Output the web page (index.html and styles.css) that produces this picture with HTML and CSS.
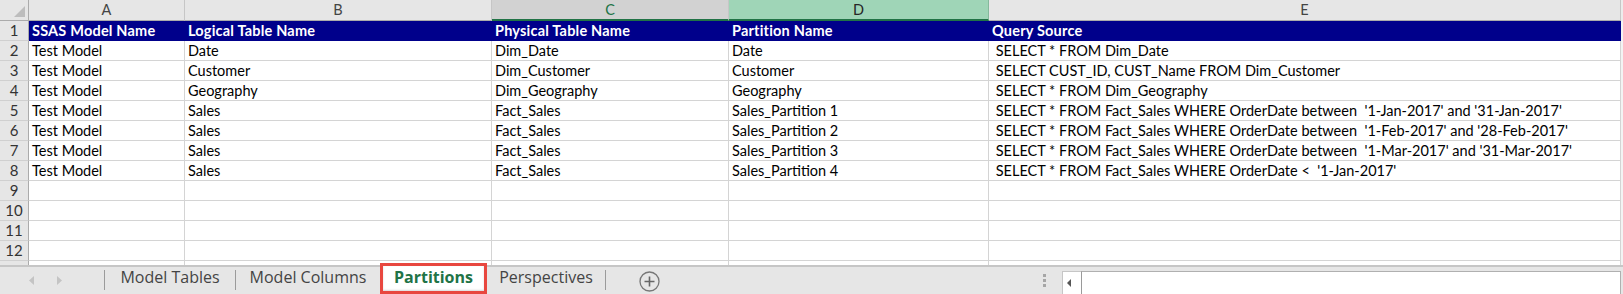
FILE: index.html
```html
<!DOCTYPE html>
<html>
<head>
<meta charset="utf-8">
<link rel="stylesheet" href="styles.css">
</head>
<body>
<div class="sheet">
  <div class="corner"><svg width="12" height="12" viewBox="0 0 12 12"><polygon points="11,0 11,11 0,11" fill="#bdbdbd"/></svg></div>
  <div class="colhead">A</div>
  <div class="colhead">B</div>
  <div class="colhead col-c">C</div>
  <div class="colhead col-d">D</div>
  <div class="colhead">E</div>
  <div class="fill head"></div>

  <div class="rowhead">1</div>
  <div class="cell hdr">SSAS Model Name</div>
  <div class="cell hdr">Logical Table Name</div>
  <div class="cell hdr">Physical Table Name</div>
  <div class="cell hdr">Partition Name</div>
  <div class="cell hdr">Query Source</div>
  <div class="fill"></div>

  <div class="rowhead">2</div>
  <div class="cell">Test Model</div>
  <div class="cell">Date</div>
  <div class="cell">Dim_Date</div>
  <div class="cell">Date</div>
  <div class="cell"> SELECT * FROM Dim_Date</div>
  <div class="fill"></div>

  <div class="rowhead">3</div>
  <div class="cell">Test Model</div>
  <div class="cell">Customer</div>
  <div class="cell">Dim_Customer</div>
  <div class="cell">Customer</div>
  <div class="cell"> SELECT CUST_ID, CUST_Name FROM Dim_Customer</div>
  <div class="fill"></div>

  <div class="rowhead">4</div>
  <div class="cell">Test Model</div>
  <div class="cell">Geography</div>
  <div class="cell">Dim_Geography</div>
  <div class="cell">Geography</div>
  <div class="cell"> SELECT * FROM Dim_Geography</div>
  <div class="fill"></div>

  <div class="rowhead">5</div>
  <div class="cell">Test Model</div>
  <div class="cell">Sales</div>
  <div class="cell">Fact_Sales</div>
  <div class="cell">Sales_Partition 1</div>
  <div class="cell"> SELECT * FROM Fact_Sales WHERE OrderDate between  '1-Jan-2017' and '31-Jan-2017'</div>
  <div class="fill"></div>

  <div class="rowhead">6</div>
  <div class="cell">Test Model</div>
  <div class="cell">Sales</div>
  <div class="cell">Fact_Sales</div>
  <div class="cell">Sales_Partition 2</div>
  <div class="cell"> SELECT * FROM Fact_Sales WHERE OrderDate between  '1-Feb-2017' and '28-Feb-2017'</div>
  <div class="fill"></div>

  <div class="rowhead">7</div>
  <div class="cell">Test Model</div>
  <div class="cell">Sales</div>
  <div class="cell">Fact_Sales</div>
  <div class="cell">Sales_Partition 3</div>
  <div class="cell"> SELECT * FROM Fact_Sales WHERE OrderDate between  '1-Mar-2017' and '31-Mar-2017'</div>
  <div class="fill"></div>

  <div class="rowhead">8</div>
  <div class="cell">Test Model</div>
  <div class="cell">Sales</div>
  <div class="cell">Fact_Sales</div>
  <div class="cell">Sales_Partition 4</div>
  <div class="cell"> SELECT * FROM Fact_Sales WHERE OrderDate &lt;  '1-Jan-2017'</div>
  <div class="fill"></div>

  <div class="rowhead">9</div>
  <div class="cell"></div><div class="cell"></div><div class="cell"></div><div class="cell"></div><div class="cell"></div>
  <div class="fill"></div>

  <div class="rowhead">10</div>
  <div class="cell"></div><div class="cell"></div><div class="cell"></div><div class="cell"></div><div class="cell"></div>
  <div class="fill"></div>

  <div class="rowhead">11</div>
  <div class="cell"></div><div class="cell"></div><div class="cell"></div><div class="cell"></div><div class="cell"></div>
  <div class="fill"></div>

  <div class="rowhead">12</div>
  <div class="cell"></div><div class="cell"></div><div class="cell"></div><div class="cell"></div><div class="cell"></div>
  <div class="fill"></div>

  <div class="rowhead part"></div>
  <div class="cell part"></div><div class="cell part"></div><div class="cell part"></div><div class="cell part"></div><div class="cell part"></div>
  <div class="fill part"></div>
</div>

<div class="tabbar">
  <div class="nav">
    <svg class="arr arr-l" width="5" height="9" viewBox="0 0 5 9"><polygon points="5,0 5,9 0,4.5" fill="#c4c4c4"/></svg>
    <svg class="arr arr-r" width="5" height="9" viewBox="0 0 5 9"><polygon points="0,0 0,9 5,4.5" fill="#c4c4c4"/></svg>
  </div>
  <span class="sep"></span>
  <div class="tab w1">Model Tables</div>
  <span class="sep"></span>
  <div class="tab w2">Model Columns</div>
  <div class="tab active">Partitions</div>
  <div class="tab w4">Perspectives</div>
  <span class="sep"></span>
  <div class="add">
    <svg width="21" height="21" viewBox="0 0 21 21"><circle cx="10.5" cy="10.5" r="9.5" fill="none" stroke="#777" stroke-width="1.3"/><path d="M10.5 5.5v10M5.5 10.5h10" stroke="#666" stroke-width="1.6"/></svg>
  </div>
  <div class="spacer"></div>
  <div class="dots"><i></i><i></i><i></i></div>
  <div class="sbtn"><svg width="5" height="8" viewBox="0 0 5 8"><polygon points="4,0 4,8 0,4" fill="#555"/></svg></div>
  <div class="track"></div>
</div>
</body>
</html>
```

FILE: styles.css
```css
html, body {
  margin: 0;
  padding: 0;
  background: #ffffff;
}

.sheet {
  display: grid;
  grid-template-columns: 29px 156px 307px 237px 260px 632px 2px;
  grid-template-rows: 21px repeat(12, 20px) 4px;
  font-family: Lato, "Liberation Sans", sans-serif;
  font-size: 14.5px;
  color: #000;
}

.sheet > div {
  box-sizing: border-box;
  overflow: hidden;
}

.corner {
  background: #e6e6e6;
  border-right: 1px solid #ababab;
  border-bottom: 1px solid #ababab;
  display: flex;
  align-items: flex-end;
  justify-content: flex-end;
  padding: 0 2px 2px 0;
}

.corner svg {
  display: block;
}

.colhead {
  background: #e6e6e6;
  color: #444;
  text-align: center;
  line-height: 20px;
  border-right: 1px solid #c6c6c6;
  border-bottom: 1px solid #ababab;
}

.colhead.col-c {
  background: #d2d2d2;
  color: #217346;
  border-bottom: 2px solid #217346;
  line-height: 19px;
}

.colhead.col-d {
  background: #9fd5b7;
  color: #262626;
  border-right-color: #85b99c;
  border-bottom: 2px solid #217346;
  line-height: 19px;
}

.fill {
  background: #f3f3f3;
}

.fill.head {
  background: #ececec;
}

.rowhead {
  background: #e6e6e6;
  color: #333;
  font-size: 15px;
  text-align: center;
  line-height: 19px;
  border-right: 1px solid #ababab;
  border-bottom: 1px solid #d0d0d0;
}

.cell {
  background: #fff;
  padding-left: 3px;
  line-height: 19px;
  white-space: pre;
  border-right: 1px solid #d4d4d4;
  border-bottom: 1px solid #d4d4d4;
}

.cell.hdr {
  background: #00008b;
  color: #fff;
  font-weight: 700;
  letter-spacing: 0.2px;
  border-right-color: #00008b;
  border-bottom-color: #00008b;
  line-height: 20px;
}

.cell.part, .rowhead.part {
  border-bottom: none;
}

.tabbar {
  display: flex;
  align-items: flex-start;
  height: 27px;
  border-top: 2px solid #c6c6c6;
  background: #e6e6e6;
  font-family: "Open Sans", "Liberation Sans", sans-serif;
  font-size: 16px;
  color: #444;
}

.nav {
  width: 104px;
  height: 27px;
  position: relative;
}

.arr {
  display: block;
  position: absolute;
  top: 9px;
}

.arr-l { left: 29px; }
.arr-r { left: 57px; }

.sep {
  width: 1px;
  height: 20px;
  margin-top: 3px;
  background: #9b9b9b;
}

.tab {
  box-sizing: border-box;
  height: 27px;
  line-height: 20px;
  text-align: center;
  white-space: nowrap;
}

.tab.w1 { width: 130px; }
.tab.w2 { width: 144px; }
.tab.w4 { width: 118px; }

.tab.active {
  width: 107px;
  height: 31px;
  margin-top: -4px;
  border: 3px solid #e8473f;
  background: #fff;
  color: #217346;
  font-weight: 700;
  line-height: 22px;
  box-shadow: inset 0 -1px 2px rgba(0, 0, 0, 0.15);
}

.add {
  margin-left: 33px;
  margin-top: 4px;
}

.add svg {
  display: block;
}

.spacer {
  flex: 1;
}

.dots {
  display: flex;
  flex-direction: column;
  gap: 2px;
  margin-top: 7px;
  margin-right: 16px;
}

.dots i {
  display: block;
  width: 3px;
  height: 3px;
  background: #a6a6a6;
}

.sbtn {
  box-sizing: border-box;
  width: 19px;
  height: 23px;
  margin-top: 4px;
  background: #fff;
  border-top: 1px solid #c6c6c6;
  border-left: 1px solid #c6c6c6;
  display: flex;
  align-items: center;
  padding-left: 4px;
}

.sbtn svg {
  display: block;
}

.track {
  box-sizing: border-box;
  width: 540px;
  height: 23px;
  margin-top: 4px;
  margin-right: 2px;
  background: #fff;
  border-top: 1px solid #b0b0b0;
  border-left: 1px solid #9a9a9a;
  border-right: 1px solid #b0b0b0;
}
```
